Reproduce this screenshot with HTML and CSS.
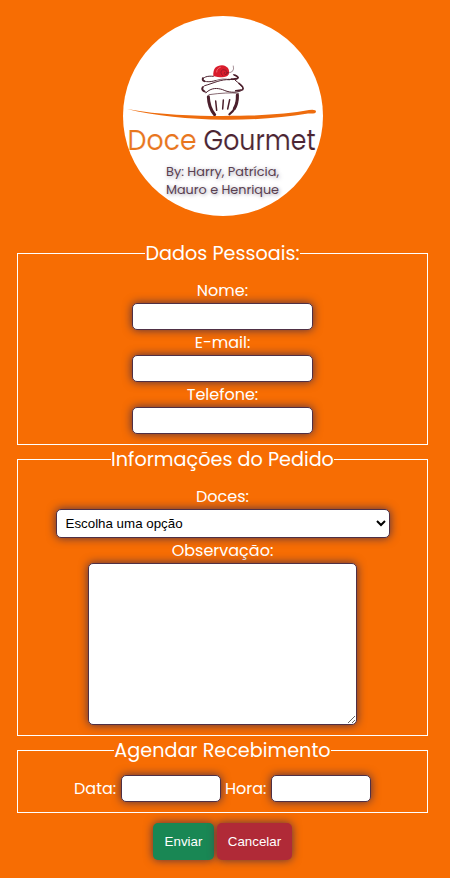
FILE: index.html
```html
<!DOCTYPE html>
<html lang="pt-BR">
<head>
<meta charset="utf-8">
<title>Doce Gourmet</title>
<link rel="stylesheet" href="styles.css">
</head>
<body>
<header class="brand">
  <svg class="logo" viewBox="123 16 200 200" role="img" aria-label="Doce Gourmet">
    <circle cx="223" cy="116" r="100" fill="#fff"/>
    <g transform="translate(190 55) scale(.33333)" fill="none" stroke="#4b1f2c" stroke-linecap="round" stroke-linejoin="round">
      <path d="M70 64C48 61 36 70 40 75C44 82 62 81 76 77" stroke-width="3"/>
      <path d="M39 69Q35 75 43 79" stroke-width="5"/>
      <path d="M76 77C92 71 106 71 118 74" stroke-width="2"/>
      <path d="M130 59Q153 68 140 72Q128 75 115 73" stroke-width="3"/>
      <path d="M134 60Q150 67 141 71Q132 73 124 72" stroke-width="5"/>
      <path d="M118 74C93 72 70 85 44 92C33 98 35 108 48 112" stroke-width="3"/>
      <path d="M38 97Q34 105 43 109" stroke-width="6"/>
      <path d="M48 113C65 97 82 99 98 104C115 112 134 115 154 107C165 100 154 91 136 76" stroke-width="3"/>
      <path d="M147 85Q164 98 158 104L137 107" stroke-width="4.5"/>
      <path d="M57 119Q113 111 146 115" stroke-width="2"/>
      <path d="M55 125Q56 158 74 179" stroke-width="9"/>
      <path d="M143 120Q143 160 118 178" stroke-width="6"/>
      <path d="M142 120Q143 145 133 161" stroke-width="9"/>
      <path d="M77 138L80 166M100 135L98 162M119 134L113 162" stroke-width="4.5"/>
      <path d="M70 63C68 41 79 31 96 31C113 32 121 46 116 58C110 71 87 67 70 63Z" fill="#d91c2c" stroke="none"/>
      <path d="M80 51Q80 40 91 37" stroke="#ed6870" stroke-width="3"/>
      <path d="M98 62Q87 52 98 44Q111 43 112 53Q111 60 105 59Q99 54 105 51" stroke="#811627" stroke-width="2"/>
      <path d="M109 54Q136 55 130 33" stroke-width="1.5"/>
    </g>
    <path d="M127 109C160 115 194 116 223 116C259 116 287 114 309 110Q316 109 316 111.7Q316 114 308 113.5C281 118 252 120 223 119.7C189 119.3 155 116 127 109Z" fill="#ee6c0d"/>
    <text class="wordmark wordmark-doce" x="127.6" y="149.6" textLength="69" lengthAdjust="spacingAndGlyphs">Doce</text>
    <text class="wordmark wordmark-gourmet" x="203.6" y="149.6" textLength="112" lengthAdjust="spacingAndGlyphs">Gourmet</text>
    <text class="authors" x="166" y="176.3" textLength="113" lengthAdjust="spacingAndGlyphs">By: Harry, Patrícia,</text>
    <text class="authors" x="166" y="194.2" textLength="113" lengthAdjust="spacingAndGlyphs">Mauro e Henrique</text>
  </svg>
</header>
<form class="order">
  <fieldset class="group">
    <legend class="legend-personal">Dados Pessoais:</legend>
    <div class="stack">
      <label class="label-name" for="nome">Nome:</label>
      <input class="field" id="nome" type="text">
      <label class="label-email" for="email">E-mail:</label>
      <input class="field" id="email" type="email">
      <label class="label-phone" for="telefone">Telefone:</label>
      <input class="field" id="telefone" type="tel">
    </div>
  </fieldset>
  <fieldset class="group">
    <legend class="legend-order">Informações do Pedido</legend>
    <div class="stack">
      <label class="label-sweets" for="doces">Doces:</label>
      <select class="field select" id="doces"><option>Escolha uma opção</option></select>
      <label class="label-notes" for="obs">Observação:</label>
      <textarea class="field notes" id="obs"></textarea>
    </div>
  </fieldset>
  <fieldset class="group schedule">
    <legend class="legend-schedule">Agendar Recebimento</legend>
    <div class="row">
      <label class="label-date" for="data">Data:</label>
      <input class="field short" id="data" type="text">
      <label class="label-time" for="hora">Hora:</label>
      <input class="field short" id="hora" type="text">
    </div>
  </fieldset>
  <div class="actions">
    <button class="button send" type="button">Enviar</button>
    <button class="button cancel" type="button">Cancelar</button>
  </div>
</form>
</body>
</html>
```

FILE: styles.css
```css
* { box-sizing: border-box; }

body {
  margin: 0;
  min-height: 878px;
  padding: 16px 22px 0 17px;
  background: #f76d03;
  color: #fff;
  font-family: Poppins, Inter, "Liberation Sans", sans-serif;
  font-size: 16px;
}

.brand { display: flex; justify-content: center; height: 223px; }
.logo { display: block; width: 200px; height: 200px; overflow: visible; }
.wordmark { font-size: 28px; stroke: #fff; stroke-width: .15px; }
.wordmark-doce { fill: #e8761e; }
.wordmark-gourmet { fill: #4b2432; }
.authors { font-size: 12.8px; fill: #5a4050; text-shadow: 1px 1px 4px #9a98aa; }

.group {
  margin: 0;
  min-width: 0;
  padding: 11px 10px 10px;
  border: 1px solid #fff;
}
.schedule { padding-top: 10px; }

legend {
  height: 29px;
  margin: 0 auto;
  padding: 0;
  font-size: 19.2px;
  line-height: 29px;
  white-space: nowrap;
  text-align: center;
}
.legend-personal { width: 155px; }
.legend-order { width: 223px; }
.legend-schedule { width: 217px; }

.stack { display: flex; flex-direction: column; align-items: center; }
label { height: 25px; line-height: 25px; white-space: nowrap; }
.stack label:first-child { height: 24px; line-height: 24px; }

.field {
  display: block;
  width: 181px;
  height: 27px;
  margin: 0;
  padding: 5px;
  border: 1px solid #4f3045;
  border-radius: 5px;
  background: #fff;
  color: #000;
  box-shadow: 0 0 10px #4f3045;
}
.select { width: 334px; height: 29px; font: 13.333px "Liberation Sans", sans-serif; }
.notes { width: 269px; height: 162px; resize: both; }
.short { width: 100px; }

.row { display: flex; justify-content: center; align-items: center; gap: 4px; }
.row label { width: 43px; }
.row .label-time { width: 42px; }

.actions { display: flex; justify-content: center; gap: 3px; padding-top: 10px; }
.button {
  height: 37px;
  padding: 0;
  border: 0;
  border-radius: 5px;
  color: #fff;
  font: 13.333px "Liberation Sans", sans-serif;
  box-shadow: 0 0 10px #4f3045;
}
.send { width: 61px; background: #198754; }
.cancel { width: 75px; background: #b02a37; }
```
